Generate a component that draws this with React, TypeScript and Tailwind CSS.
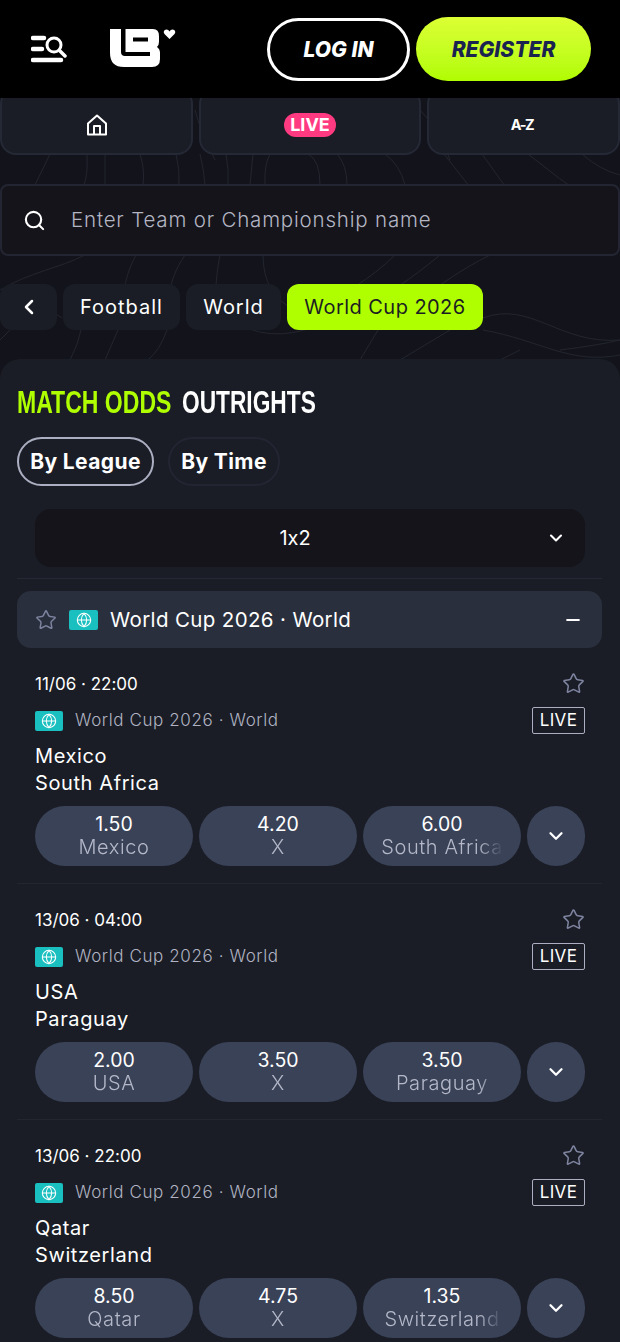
import { ChevronDown, ChevronLeft, Search, Star, Minus, Globe } from "lucide-react";

const MATCHES = [
  { date: "11/06 · 22:00", home: "Mexico", away: "South Africa", odds: ["1.50", "4.20", "6.00"] },
  { date: "13/06 · 04:00", home: "USA", away: "Paraguay", odds: ["2.00", "3.50", "3.50"] },
  { date: "13/06 · 22:00", home: "Qatar", away: "Switzerland", odds: ["8.50", "4.75", "1.35"] },
];

function Contours() {
  const lines = [
    "M50 154 L35 185", "M87 154 Q88 175 84 185", "M105 154 V185", "M140 154 Q145 170 143 185",
    "M176 154 Q180 170 179 185", "M200 154 Q204 170 205 185", "M226 154 Q229 170 228 185", "M253 154 L250 185",
    "M270 154 Q264 165 265 185", "M308 154 Q320 160 320 185", "M337 154 Q347 165 347 185", "M385 154 Q400 165 405 185",
    "M444 154 L480 200", "M482 154 L515 200", "M528 154 Q560 180 590 200", "M582 154 Q600 170 620 175",
    "M85 255 C60 268 30 272 0 290", "M136 255 C128 270 126 280 124 290", "M185 255 C175 270 172 280 170 290",
    "M220 255 Q216 275 216 290", "M263 255 Q263 295 295 310", "M395 255 C370 280 340 295 320 310",
    "M440 255 C410 280 385 295 365 310", "M490 255 C460 270 440 285 420 300", "M483 318 C530 300 560 345 620 340",
    "M483 330 C540 340 570 365 620 355", "M81 330 Q78 345 70 360", "M118 330 L105 360", "M167 330 Q160 350 148 360",
    "M240 325 Q280 345 330 320", "M378 330 L360 360", "M450 330 L400 360", "M520 350 L500 360", "M560 350 Q600 345 620 340",
    "M50 310 L62 318", "M0 340 L10 330", "M195 110 Q200 130 215 160", "M420 110 Q440 130 450 160",
  ];
  return (
    <svg className="absolute left-0 top-[98px]" width="620" height="300" viewBox="0 98 620 300" fill="none">
      {lines.map(d => <path key={d} d={d} stroke="#23252f" strokeWidth="1" />)}
    </svg>
  );
}

function Logo() {
  return (
    <svg width="66" height="40" viewBox="0 0 66 40" fill="none">
      <path fill="#fff" d="M0 0H43Q49 0 49 7V13Q49 16 47 18Q50 20 50 24V30Q50 38 42 38H14Q0 38 0 24Z" />
      <path fill="#000" d="M11 0H15.5V23H40V27H15Q11 27 11 23Z" />
      <path fill="#000" d="M23 8.5H38V12.5H23Z" />
      <path fill="#fff" d="M59.5 10 L54.5 5 Q53 3 54.5 1.2 Q56.5 -0.3 58.5 1.2 L59.5 2.4 L60.5 1.2 Q62.5 -0.3 64.5 1.2 Q66 3 64.5 5Z" />
    </svg>
  );
}

function MenuSearch() {
  return (
    <svg width="36" height="29" viewBox="0 0 36 29" fill="none" stroke="#fff" strokeLinecap="round">
      <path d="M2 3H13M2 14H11M2 25H30" strokeWidth="4.5" />
      <circle cx="23" cy="10" r="7" strokeWidth="3" />
      <path d="M29 16L34 21" strokeWidth="3.5" />
    </svg>
  );
}

function HomeIcon() {
  return (
    <svg width="20" height="22" viewBox="0 0 20 22" fill="none" stroke="#fff" strokeWidth="2" strokeLinejoin="round">
      <path d="M1 9.5L10 1.5L19 9.5V20.5H1Z" />
      <path d="M7 20.5V12H13V20.5" />
    </svg>
  );
}

function FlagBadge({ small }: { small?: boolean }) {
  return (
    <span className={`flex h-[20px] shrink-0 items-center justify-center rounded-[2px] bg-[#1abfc0] ${small ? "w-[28px]" : "w-[29px]"}`}>
      <Globe size={16} color="#fff" strokeWidth={1.6} />
    </span>
  );
}

function OddButton({ odd, label }: { odd: string; label: string }) {
  return (
    <button className="flex h-[60px] w-[158px] shrink-0 flex-col items-center justify-center rounded-[30px] bg-[#394257]">
      <span className="text-[19.5px] leading-[23px] text-white">{odd}</span>
      <span className="w-[122px] overflow-hidden whitespace-nowrap text-center text-[20px] font-light leading-[23px] tracking-[0.6px] text-[#b4b8c9] [mask-image:linear-gradient(90deg,#000_80%,transparent)]">{label}</span>
    </button>
  );
}

function MatchCard({ date, home, away, odds }: { date: string; home: string; away: string; odds: string[] }) {
  return (
    <div className="border-b border-[#232630] pt-[23px] pb-[17px]">
      <div className="pl-[18px] pr-[17px]">
        <div className="flex h-[24px] items-center justify-between">
          <span className="pt-[3px] text-[17px] text-white">{date}</span>
          <Star size={23} color="#7e84a0" strokeWidth={1.6} className="mr-[0.5px]" />
        </div>
        <div className="mt-[12px] flex h-[27px] items-center justify-between">
          <div className="flex items-center gap-[12px]">
            <FlagBadge small />
            <span className="text-[17px] font-light tracking-[0.6px] text-[#b0b3c2]">World Cup 2026 · World</span>
          </div>
          <span className="flex h-[27px] w-[53px] items-center justify-center rounded-[2px] border border-[#abafc1] text-[17px] tracking-[0.3px] text-white">LIVE</span>
        </div>
        <div className="mt-[9px] text-[20px] leading-[27px] tracking-[0.6px] text-white">{home}</div>
        <div className="text-[20px] leading-[27px] tracking-[0.6px] text-white">{away}</div>
        <div className="mt-[9px] flex gap-[6px]">
          <OddButton odd={odds[0]} label={home} />
          <OddButton odd={odds[1]} label="X" />
          <OddButton odd={odds[2]} label={away} />
          <button className="flex h-[60px] w-[58px] shrink-0 items-center justify-center rounded-full bg-[#394257]">
            <ChevronDown size={22} color="#fff" strokeWidth={2.5} />
          </button>
        </div>
      </div>
    </div>
  );
}

export default function App() {
  return (
    <div className="relative h-[1342px] w-[620px] overflow-hidden bg-[#13141b] font-['Inter',sans-serif] text-white [font-feature-settings:'calt'_0]">
      <Contours />

      {/* header */}
      <div className="relative z-10 flex h-[98px] items-center bg-black pl-[31px] pr-[29px]">
        <MenuSearch />
        <div className="ml-[43px] mt-[-1px]"><Logo /></div>
        <button className="ml-auto flex h-[63px] w-[143px] items-center justify-center rounded-full border-[3px] border-white pt-px text-[21px] font-extrabold italic text-white">LOG IN</button>
        <button className="ml-[6px] flex h-[64px] w-[175px] items-center justify-center rounded-full bg-gradient-to-b from-[#dcff33] to-[#b0fc00] pt-px text-[21px] font-extrabold italic text-[#1a2350]">REGISTER</button>
      </div>

      {/* top tabs */}
      <div className="relative mt-[-10px] flex gap-[6px]">
        <div className="flex h-[67px] w-[193px] items-center justify-center rounded-[16px] border-2 border-[#252936] bg-[#1a1d25] pt-[7px]"><HomeIcon /></div>
        <div className="flex h-[67px] w-[222px] items-center justify-center rounded-[16px] border-2 border-[#252936] bg-[#1a1d25] pt-[7px]">
          <span className="rounded-full bg-[#ff3a80] px-[6px] text-[18px] font-bold leading-[24px] text-white">LIVE</span>
        </div>
        <div className="flex h-[67px] flex-1 items-center justify-center rounded-[16px] border-2 border-[#252936] bg-[#1a1d25] pt-[7px]">
          <span className="mr-[3px] text-[14.5px] font-bold tracking-[-1.4px] text-white">A-Z</span>
        </div>
      </div>

      {/* search */}
      <div className="relative mt-[29px] flex h-[72px] items-center rounded-[8px] border-2 border-[#232632] bg-[#14141a] pl-[21px]">
        <Search size={23} color="#fff" strokeWidth={2.2} />
        <span className="ml-[25px] text-[20.5px] font-light tracking-[0.82px] text-[#b4b6c4]">Enter Team or Championship name</span>
      </div>

      {/* breadcrumb */}
      <div className="relative mt-[28px] flex h-[46px] gap-[6px] text-[20px]">
        <div className="flex w-[57px] items-center justify-center rounded-[12px] bg-[#1a1d25]"><ChevronLeft size={24} color="#fff" strokeWidth={2.5} /></div>
        <div className="flex w-[117px] items-center justify-center rounded-[12px] bg-[#1a1d25] tracking-[1px]">Football</div>
        <div className="flex w-[95px] items-center justify-center rounded-[12px] bg-[#1a1d25] tracking-[1px]">World</div>
        <div className="flex w-[196px] items-center justify-center rounded-[12px] bg-[#b0ff00] tracking-[0.45px] text-[#1b1e22]">World Cup 2026</div>
      </div>

      {/* panel */}
      <div className="relative mt-[29px] rounded-t-[20px] bg-[#1a1d25] pl-[17px] pr-[18px] pt-[24px]">
        <div className="flex h-[38px] items-center gap-[12px] font-['Liberation_Sans',sans-serif] text-[32px] font-bold">
          <span className="w-[153px] origin-left scale-x-[0.72] whitespace-nowrap text-[#b0ff00]">MATCH ODDS</span>
          <span className="w-[134px] origin-left scale-x-[0.71] whitespace-nowrap text-white">OUTRIGHTS</span>
        </div>
        <div className="mt-[16px] flex gap-[14px]">
          <button className="h-[49px] w-[137px] rounded-full border-2 border-[#abafc1] text-[21px] font-bold tracking-[0.4px] text-white">By League</button>
          <button className="h-[49px] w-[112px] rounded-full border-2 border-[#232632] text-[21px] font-bold tracking-[0.4px] text-white">By Time</button>
        </div>
        <div className="relative ml-[18px] mr-[17px] mt-[23px] flex h-[58px] items-center justify-center rounded-[16px] bg-[#14141a] pr-[30px] text-[20px] text-white">
          1x2
          <ChevronDown size={20} color="#fff" strokeWidth={2.5} className="absolute right-[19px]" />
        </div>
        <div className="mt-[11px] border-t border-[#252936]" />
        <div className="mt-[12px] flex h-[57px] items-center rounded-[14px] bg-[#2a2f3d] pl-[18px] pr-[19px]">
          <Star size={22} color="#7e84a0" strokeWidth={1.6} />
          <span className="ml-[12px]"><FlagBadge /></span>
          <span className="ml-[12px] pt-px text-[20.5px] tracking-[0.36px] text-white">World Cup 2026 · World</span>
          <Minus size={20} color="#fff" strokeWidth={2.5} className="ml-auto" />
        </div>
        {MATCHES.map(m => <MatchCard key={m.date} {...m} />)}
      </div>
    </div>
  );
}
